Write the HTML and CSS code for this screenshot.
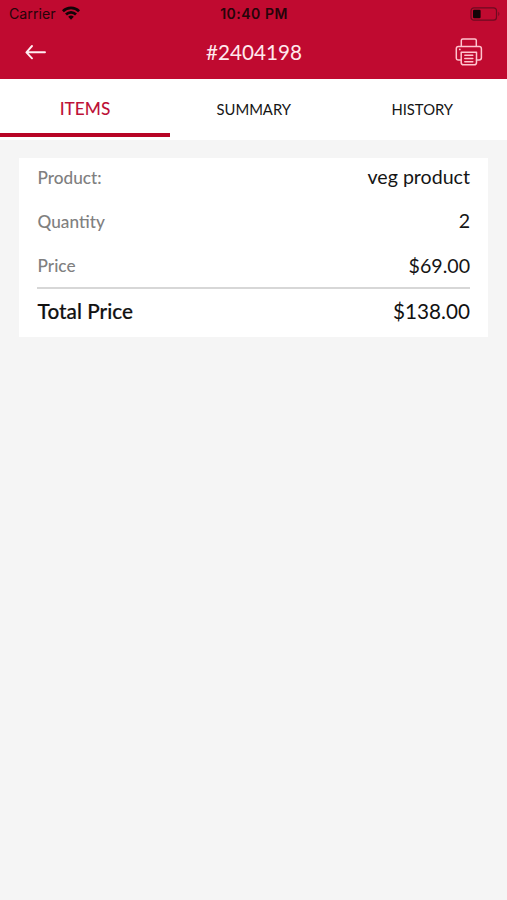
FILE: index.html
```html
<!DOCTYPE html>
<html lang="en">
<head>
<meta charset="utf-8">
<title>Order #2404198</title>
<link rel="stylesheet" href="styles.css">
</head>
<body>
<header class="header">
  <div class="status">
    <div class="carrier"><span class="carrier-name">Carrier</span>
      <svg class="wifi" viewBox="0 0 18 14" width="18" height="14"><g fill="none" stroke="currentColor" stroke-width="2.7"><path d="M.9 5.2a11.5 11.5 0 0 1 16.2 0"/><path d="M4 8.5a7 7 0 0 1 10 0"/></g><path d="M6.2 10.8a4 4 0 0 1 5.6 0L9 13.7z" fill="currentColor"/></svg>
    </div>
    <span class="time">10:40 PM</span>
    <svg class="battery" viewBox="0 0 31 14" width="31" height="14"><rect x="1" y=".8" width="25.5" height="12.4" rx="3" fill="none" stroke="#6c0b20" stroke-width="1.2"/><rect x="3" y="2.7" width="7.6" height="8.6" rx="1.2" fill="#120407"/><path d="M28.3 4.8q2.2 2.2 0 4.4z" fill="#6c0b20"/></svg>
  </div>
  <div class="nav">
    <svg class="back" viewBox="0 0 22 16" width="22" height="16"><path d="M20 8.3H1.6M7 2 1.4 8.3 7 14.3" fill="none" stroke="#ffeef1" stroke-width="1.9" stroke-linecap="round" stroke-linejoin="round"/></svg>
    <h1 class="title">#2404198</h1>
    <svg class="print" viewBox="0 0 28 28" width="28" height="28"><g fill="none" stroke="#ffc4ce" stroke-width="1.5" stroke-linejoin="round" stroke-linecap="round"><path d="M6.3 8V2.5q0-1.5 1.5-1.5h12q1.5 0 1.5 1.5V8"/><path d="M6.2 22H3.5Q1.3 22 1.3 19.8v-9Q1.3 8.6 3.5 8.6h20.7q2.2 0 2.2 2.2v9q0 2.2-2.2 2.2h-2.7"/><path d="M6.2 14.2h15.3v10.2q0 2.4-2.4 2.4H8.6q-2.4 0-2.4-2.4z"/><path d="M9.8 17.3h8M9.8 20.5h8M9.8 23.7h8"/></g><circle cx="4.8" cy="11.4" r=".9" fill="#ffc4ce"/></svg>
  </div>
</header>
<nav class="tabs">
  <div class="tab active"><span>ITEMS</span></div>
  <div class="tab"><span>SUMMARY</span></div>
  <div class="tab"><span>HISTORY</span></div>
</nav>
<main class="card">
  <div class="row"><span class="label">Product:</span><span class="value">veg product</span></div>
  <div class="row"><span class="label">Quantity</span><span class="value">2</span></div>
  <div class="row"><span class="label">Price</span><span class="value">$69.00</span></div>
  <div class="row total"><span class="label">Total Price</span><span class="value">$138.00</span></div>
</main>
</body>
</html>
```
FILE: styles.css
```css
* { box-sizing: border-box; }
body { margin: 0; min-height: 900px; background: #f5f5f5; color: #151515; font-family: Lato, sans-serif; }
svg { display: block; }
.header { height: 79px; background: #c00a30; }
.status { height: 27px; padding: 0 8px 0 9px; display: grid; grid-template-columns: 1fr auto 1fr; align-items: center; font: 14px/20px Inter, sans-serif; color: #260409; }
.carrier { display: flex; align-items: center; gap: 6px; }
.carrier-name { font-size: 14.2px; }
.wifi { color: #120407; margin-top: -2px; }
.time { font-size: 14px; font-weight: 600; letter-spacing: .5px; }
.battery { justify-self: end; margin-right: -2px; }
.nav { height: 50px; padding: 0 24px 0 25px; display: grid; grid-template-columns: 1fr auto 1fr; align-items: center; }
.title { margin: 0; font-size: 20.7px; line-height: 26px; font-weight: 400; color: #ffe9ed; }
.print { justify-self: end; }
.tabs { height: 61px; display: grid; grid-template-columns: repeat(3, 1fr); background: #fff; }
.tab { display: flex; align-items: center; justify-content: center; padding: 5px 1px 0 0; border-bottom: 4px solid transparent; height: 58px; font-size: 14.8px; }
.tab.active { width: 170px; padding: 5px 0 0; color: #bd1238; border-color: #b80526; font-size: 17.3px; font-weight: 500; }
.card { margin: 18px 19px 0; padding: 0 18px; height: 179px; background: #fff; }
.row { height: 44.4px; display: flex; justify-content: space-between; align-items: flex-start; line-height: 26px; padding-top: 6px; }
.label { padding: .6px 0 0 .6px; font-size: 17.2px; font-weight: 500; color: #808080; }
.value { font-size: 19.6px; }
.row:nth-child(3) { height: 42.2px; border-bottom: 2px solid #d7d7d7; }
.total { padding-top: 9px; }
.total .label, .total .value { padding-top: 0; font-size: 20.7px; color: #111; }
.total .label { letter-spacing: .05px; -webkit-text-stroke: .2px; }
```
